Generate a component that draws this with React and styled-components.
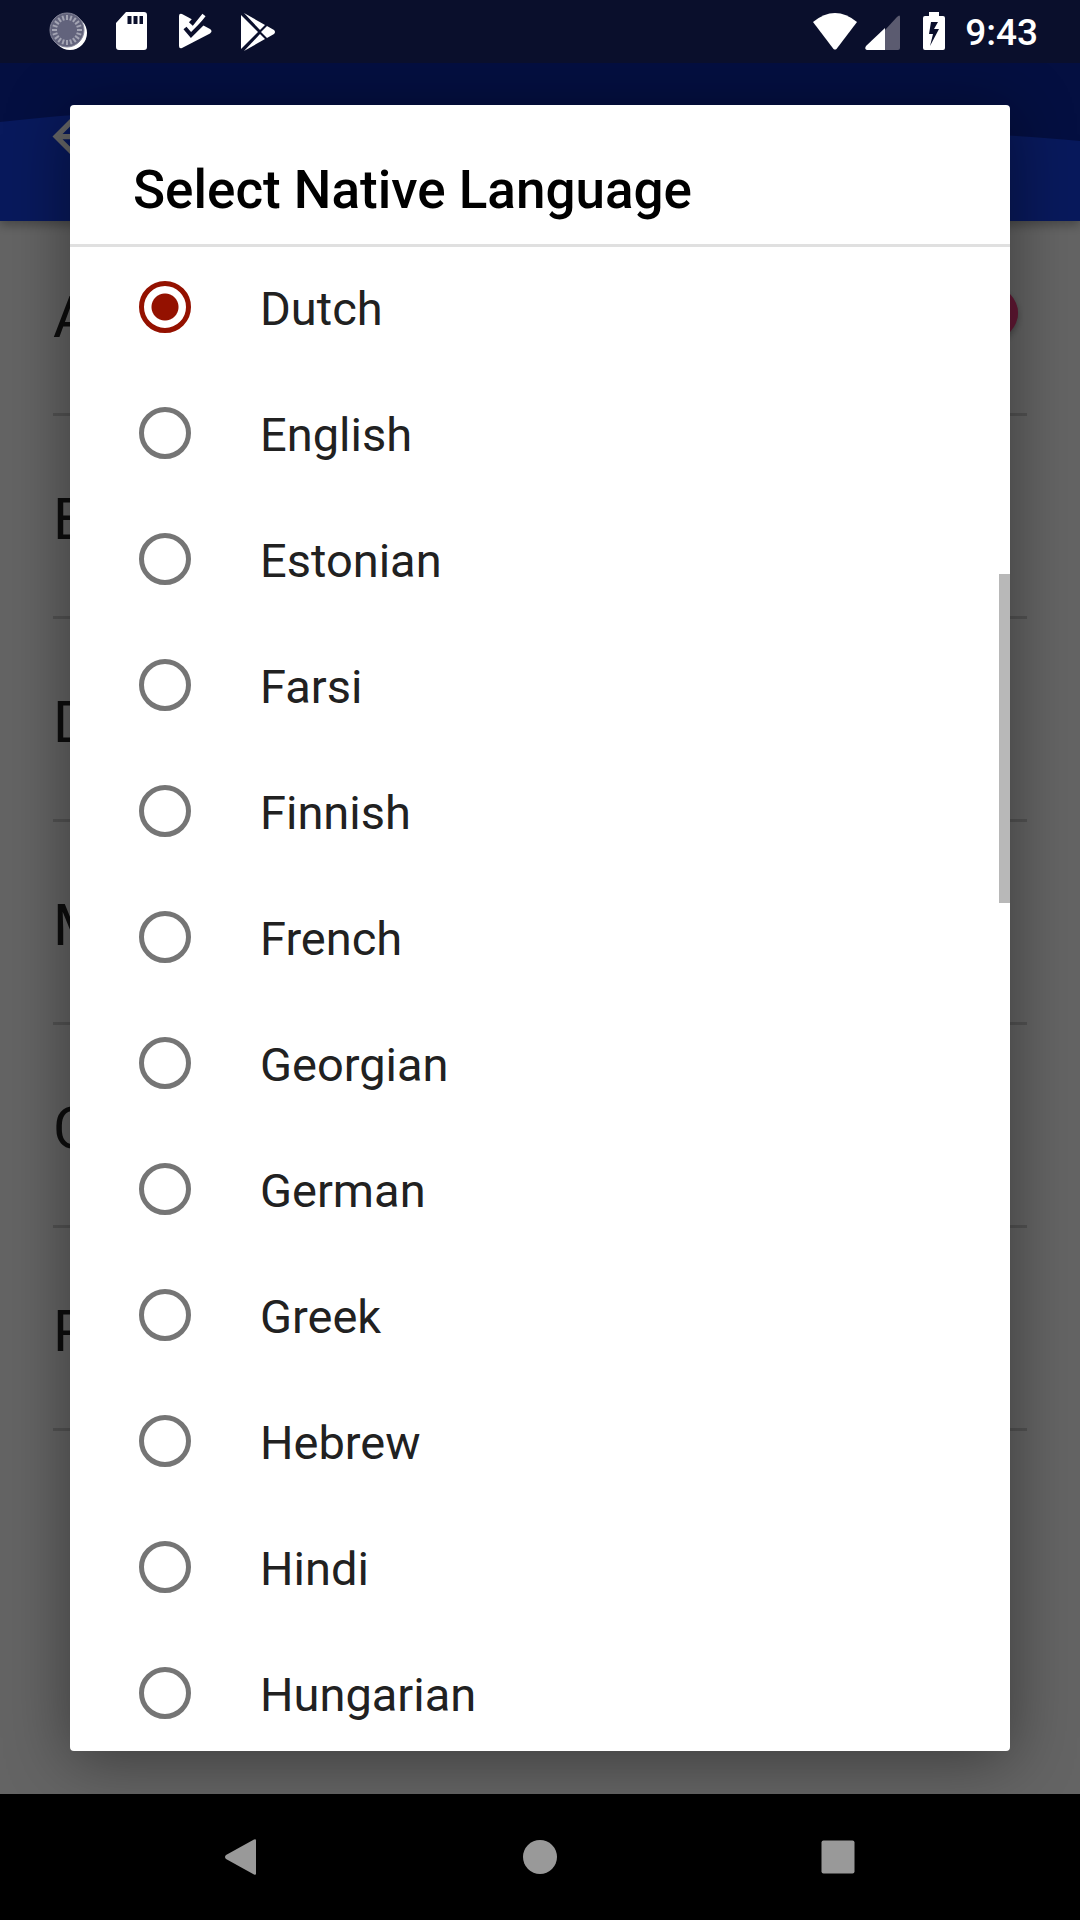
import React, { useState } from 'react';
import styled, { createGlobalStyle } from 'styled-components';

const LANGUAGES = [
  'Dutch',
  'English',
  'Estonian',
  'Farsi',
  'Finnish',
  'French',
  'Georgian',
  'German',
  'Greek',
  'Hebrew',
  'Hindi',
  'Hungarian',
];

const SETTINGS = ['A', 'E', 'D', 'M', 'C', 'P'];

// tick marks inside the round sync icon
const TICKS = Array.from({ length: 20 }, (_, i) => i * 18);

const App = () => {
  const [language, setLanguage] = useState('Dutch');
  const [enabled, setEnabled] = useState(true);

  return (
    <Screen>
      <GlobalStyle />

      <StatusBar>
        <StatusGroup>
          <StatusIcon viewBox="0 0 48 48">
            <circle cx="26" cy="25" r="17" fill="#fff" />
            <circle cx="23" cy="22" r="17" fill="#62637c" />
            <circle cx="23" cy="22" r="17" fill="none" stroke="#85869a" strokeWidth="1" />
            {TICKS.map(angle => (
              <path
                key={angle}
                d="M23 7v5"
                stroke="#a3a4b3"
                strokeWidth="2"
                transform={`rotate(${angle} 23 22)`}
              />
            ))}
          </StatusIcon>
          <StatusIcon viewBox="0 0 48 48">
            <path
              fill="#fff"
              fillRule="evenodd"
              d="M19 4h18a3 3 0 0 1 3 3v32a3 3 0 0 1-3 3H12a3 3 0 0 1-3-3V15zM20.500 8v8h4V8zM26.500 8v8h4V8zM32.500 8v8h3.500V8z"
            />
          </StatusIcon>
          <StatusIcon viewBox="0 0 48 48">
            <path
              fill="#fff"
              d="M9 8q0-3 3-2l28 15q3 2 0 4.500L12 40q-3 1-3-2z"
            />
            <path fill="none" stroke="#0b0f2c" strokeWidth="11" d="M23 18L35 5" />
            <path fill="none" stroke="#fff" strokeWidth="4" d="M18 18l4 4L34 7" />
            <path fill="none" stroke="#0b0f2c" strokeWidth="4" d="M15 20l6 7 12-12" />
          </StatusIcon>
          <StatusIcon viewBox="0 0 48 48">
            <path fill="#fff" d="M8 7l17 17L8 41z" />
            <path fill="#fff" d="M11 5l21 12-5 5z" />
            <path fill="#fff" d="M11 43l21-12-5-5z" />
            <path fill="#fff" d="M34 18l7 4q2 2 0 4l-7 4-6-6z" />
          </StatusIcon>
        </StatusGroup>
        <StatusGroup $tight>
          <StatusIcon viewBox="0 0 48 48">
            <path fill="#fff" d="M2 14Q24-4 46 14L25.500 41Q24 42 22.500 41z" />
          </StatusIcon>
          <StatusIcon viewBox="0 0 48 48">
            <path fill="#5b5b70" d="M26 22L38 9q3-3 3 0v31q0 2-2 2H26z" />
            <path fill="#fff" d="M26 20v22H8q-3-1-1-4z" />
          </StatusIcon>
          <StatusIcon viewBox="0 0 48 48">
            <path
              fill="#fff"
              fillRule="evenodd"
              d="M22 4h10v4h4q2 0 2 2v30q0 2-2 2H18q-2 0-2-2V10q0-2 2-2h4zM24 14l-2 12h4l-3 12 9-17h-5l4-7z"
            />
          </StatusIcon>
          <Clock>9:43</Clock>
        </StatusGroup>
      </StatusBar>

      <Main>
        <AppBar>
          <Wave viewBox="0 0 1080 158" preserveAspectRatio="none">
            <path fill="#143fe6" d="M0 59C200 36 340 50 540 62S860 58 1080 78V158H0z" />
          </Wave>
          <BackButton aria-label="Back">
            <svg width="63" height="63" viewBox="0 0 24 24">
              <path fill="#fff" d="M20 11H7.830l5.590-5.590L12 4l-8 8 8 8 1.410-1.410L7.830 13H20z" />
            </svg>
          </BackButton>
        </AppBar>

        <SettingsList>
          {SETTINGS.map((name, i) => (
            <SettingsRow key={name}>
              <span>{name}</span>
              {i === 0 && (
                <Switch
                  type="checkbox"
                  aria-label={name}
                  checked={enabled}
                  onChange={() => setEnabled(!enabled)}
                />
              )}
            </SettingsRow>
          ))}
        </SettingsList>

        <Scrim>
          <Dialog role="dialog" aria-labelledby="dialog-title">
            <DialogTitle id="dialog-title">Select Native Language</DialogTitle>
            <OptionArea>
              <OptionList role="radiogroup" aria-labelledby="dialog-title">
                {LANGUAGES.map(name => (
                  <Option key={name}>
                    <Radio
                      type="radio"
                      name="language"
                      value={name}
                      checked={language === name}
                      onChange={() => setLanguage(name)}
                    />
                    <OptionText>{name}</OptionText>
                  </Option>
                ))}
              </OptionList>
              <ScrollThumb />
            </OptionArea>
          </Dialog>
        </Scrim>
      </Main>

      <NavBar>
        <NavButton aria-label="Back">
          <svg width="36" height="36" viewBox="0 0 36 36">
            <path fill="#999" d="M30 .500q2-1 2 1v33q0 2-2 1L2 20q-2-2 0-4z" />
          </svg>
        </NavButton>
        <NavButton aria-label="Home">
          <svg width="36" height="36" viewBox="0 0 36 36">
            <circle cx="18" cy="18" r="17" fill="#999" />
          </svg>
        </NavButton>
        <NavButton aria-label="Recent apps">
          <svg width="36" height="36" viewBox="0 0 36 36">
            <rect x="1.500" y="1.500" width="33" height="33" rx="2" fill="#999" />
          </svg>
        </NavButton>
      </NavBar>
    </Screen>
  );
};

const GlobalStyle = createGlobalStyle`
  * {
    box-sizing: border-box;
  }

  body {
    margin: 0;
    font-family: Roboto, sans-serif;
    background: #000;
  }
`;

const Screen = styled.div`
  display: flex;
  flex-direction: column;
  height: 100vh;
  overflow: hidden;
`;

const StatusBar = styled.header`
  position: relative;
  z-index: 1;
  flex: none;
  display: flex;
  justify-content: space-between;
  height: 63px;
  padding: 8px 42px 7px 44px;
  background: #0a0f2c;
`;

const StatusGroup = styled.div`
  display: flex;
  align-items: center;
  gap: ${props => (props.$tight ? '0' : '15px')};
`;

const StatusIcon = styled.svg`
  width: 48px;
  height: 48px;
`;

const Clock = styled.span`
  padding: 2px 0 0 10px;
  color: #fff;
  font-size: 37px;
  font-weight: 500;
  line-height: 48px;
`;

const Main = styled.main`
  position: relative;
  flex: 1;
  min-height: 0;
  background: #fafafa;
`;

const AppBar = styled.div`
  position: relative;
  height: 158px;
  padding: 0 42px 11px;
  display: flex;
  align-items: center;
  background: #0c26a2;
  box-shadow: 0 4px 10px rgba(0, 0, 0, 0.3);
`;

const Wave = styled.svg`
  position: absolute;
  inset: 0;
  width: 100%;
  height: 100%;
`;

const BackButton = styled.button`
  position: relative;
  display: flex;
  padding: 0;
  border: none;
  background: none;
`;

const SettingsList = styled.div`
  padding: 0 53px;
`;

const SettingsRow = styled.div`
  display: flex;
  align-items: center;
  justify-content: space-between;
  height: 203px;
  padding-top: 6px;
  border-bottom: 3px solid #d0d0d0;
  color: #212121;
  font-size: 58px;

  &:first-child {
    height: 195px;
    padding-top: 0;
  }
`;

const Switch = styled.input`
  appearance: none;
  display: flex;
  align-items: center;
  justify-content: flex-end;
  width: 90px;
  height: 36px;
  margin: 0 9px 9px 0;
  border-radius: 18px;
  background: #f48fb1;

  &::before {
    content: '';
    width: 52px;
    height: 52px;
    border-radius: 50%;
    background: #fa3c84;
    box-shadow: 0 3px 6px rgba(0, 0, 0, 0.3);
  }
`;

const Scrim = styled.div`
  position: absolute;
  inset: 0;
  display: flex;
  padding: 42px 70px 43px;
  background: rgba(0, 0, 0, 0.6);
`;

const Dialog = styled.section`
  flex: 1;
  display: flex;
  flex-direction: column;
  border-radius: 4px;
  background: #fff;
  box-shadow: 0 8px 64px rgba(0, 0, 0, 0.42);
`;

const DialogTitle = styled.h1`
  position: relative;
  z-index: 1;
  flex: none;
  height: 139px;
  margin: 0;
  padding: 53px 63px 0;
  box-shadow: 0 3px 0 #e0e0e0;
  color: #000;
  font-size: 53px;
  font-weight: 500;
  line-height: 64px;
`;

const OptionArea = styled.div`
  position: relative;
  flex: 1;
  min-height: 0;
`;

const OptionList = styled.div`
  height: 100%;
  overflow-y: auto;
  scrollbar-width: none;
`;

const Option = styled.label`
  display: flex;
  align-items: center;
  gap: 69px;
  height: 126px;
  padding: 0 69px;
`;

const Radio = styled.input`
  appearance: none;
  flex: none;
  width: 52px;
  height: 52px;
  margin: 0;
  border: 5px solid #757575;
  border-radius: 50%;

  &:checked {
    border-color: #941100;
    background: radial-gradient(circle, #941100 13px, transparent 14px);
  }
`;

const OptionText = styled.span`
  padding-top: 4px;
  color: #212121;
  font-size: 47px;
  line-height: 56px;
`;

const ScrollThumb = styled.div`
  position: absolute;
  top: 330px;
  right: 0;
  width: 11px;
  height: 329px;
  background: #b8b8b8;
`;

const NavBar = styled.nav`
  position: relative;
  z-index: 1;
  flex: none;
  display: grid;
  grid-template-columns: repeat(3, 1fr);
  height: 126px;
  padding: 0 93px;
  background: #000;
`;

const NavButton = styled.button`
  display: flex;
  align-items: center;
  justify-content: center;
  padding: 0;
  border: none;
  background: none;
`;

export default App;
